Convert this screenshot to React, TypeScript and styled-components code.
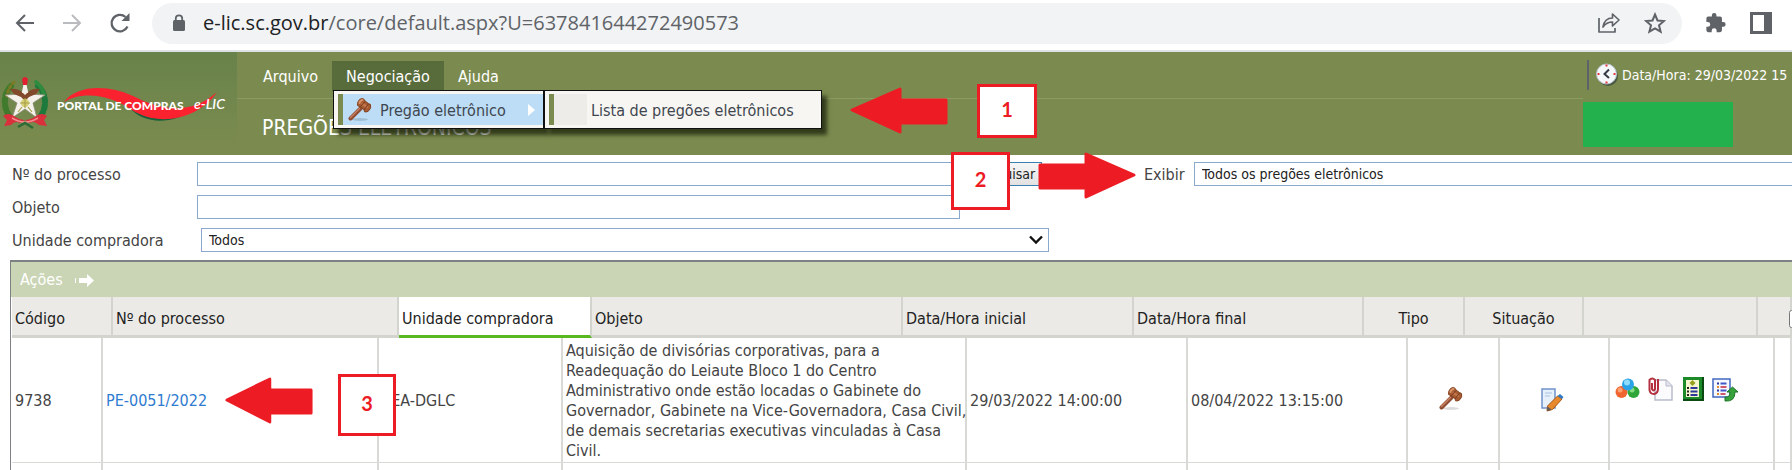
import React from "react";
import styled, { createGlobalStyle, css } from "styled-components";

const GlobalStyle = createGlobalStyle`
  * { box-sizing: border-box; }
  body {
    margin: 0;
    background: #fff;
    color: #444;
    font: 16px/20px "DejaVu Sans Condensed", "Noto Sans", sans-serif;
  }
  button, input, select { font: inherit; color: inherit; }
`;

const Page = styled.div`
  position: relative;
  overflow: hidden;
`;

/* Browser bar */
const BrowserBar = styled.div`
  display: flex;
  align-items: center;
  height: 52px;
  padding: 0 11px 4px 12px;
  border-bottom: 2px solid #dee1e4;
`;

const ToolButton = styled.button<{ $width: number }>`
  display: flex;
  align-items: center;
  justify-content: center;
  width: ${(p) => p.$width}px;
  height: 32px;
  padding: 0;
  border: 0;
  background: none;
  color: #5f6368;
`;

const AddressBox = styled.div`
  display: flex;
  align-items: center;
  flex: 1;
  height: 41px;
  margin: 0 9px 0 18px;
  padding: 0 4px 0 20px;
  border-radius: 21px;
  background: #f1f3f4;
`;

const Url = styled.div`
  flex: 1;
  padding-left: 17px;
  font: 20px/28px "Open Sans", "Noto Sans", sans-serif;
  color: #5f6368;
  white-space: nowrap;
`;

const Host = styled.span`
  color: #202124;
`;

/* Portal header */
const Header = styled.header`
  display: flex;
  height: 103px;
  background: #7b8b4f;
  color: #fff;
`;

const Brand = styled.div`
  flex: none;
  width: 237px;
  background: linear-gradient(#67824a, #7b8b4f 90%);
`;

const HeaderMain = styled.div`
  flex: 1;
  min-width: 0;
`;

const MenuBar = styled.nav`
  display: flex;
  align-items: flex-end;
  height: 47px;
  padding: 0 0 7px 12px;
  border-bottom: 1px solid #8c9b63;
`;

const MenuButton = styled.button<{ $open?: boolean }>`
  height: 30px;
  padding: 2px 14px 0;
  border: 0;
  background: ${(p) => (p.$open ? "#586b3b" : "transparent")};
  color: #fff;
`;

const Title = styled.h1`
  margin: 15px 0 0 25px;
  font-size: 21px;
  line-height: 28px;
  font-weight: 400;
`;

const Session = styled.div`
  flex: none;
  width: 209px;
  padding-top: 8px;
  overflow: hidden;
`;

const Clock = styled.div`
  display: flex;
  align-items: center;
  gap: 4px;
  height: 30px;
  margin-left: 4px;
  padding-left: 7px;
  border-left: 2px solid #5d636b;
  font-size: 14px;
  white-space: nowrap;

  svg { flex: none; }
`;

const UserBlock = styled.div`
  width: 150px;
  height: 45px;
  margin-top: 12px;
  background: #22b14c;
`;

/* Drop-down menus over the header */
const Menus = styled.div`
  position: absolute;
  top: 90px;
  left: 333px;
  display: flex;
  align-items: flex-start;
`;

const MenuPanel = styled.div<{ $width: number }>`
  width: ${(p) => p.$width}px;
  height: 39px;
  padding: 3px 0 3px 4px;
  border: 1px solid #111;
  background: #f7f6f2;
  box-shadow: 5px 6px 4px rgba(20, 25, 5, 0.7);
`;

const MenuItem = styled.button<{ $active?: boolean }>`
  display: flex;
  align-items: center;
  width: 100%;
  height: 31px;
  padding: 0;
  border: 0;
  border-left: 5px solid #7b8b4f;
  background: ${(p) => (p.$active ? "#bcddf5" : "transparent")};
  color: #3f4650;
  white-space: nowrap;
`;

const ItemIcon = styled.span<{ $shaded?: boolean }>`
  display: flex;
  align-items: center;
  justify-content: center;
  width: 33px;
  height: 31px;
  margin-right: 4px;
  ${(p) => p.$shaded && css`background: #edece8;`}
`;

const ItemText = styled.span`
  flex: 1;
  padding-top: 2px;
  text-align: left;
`;

/* Search form */
const Filters = styled.form`
  display: flex;
  align-items: flex-start;
  height: 105px;
  padding: 7px 0 0 12px;
`;

const FilterColumn = styled.div`
  display: flex;
  flex-direction: column;
  flex: none;
  gap: 9px;
  width: 1037px;
`;

const Field = styled.div`
  display: flex;
  align-items: center;
  height: 24px;
`;

const Label = styled.label<{ $width: number }>`
  flex: none;
  width: ${(p) => p.$width}px;
  padding-top: 2px;
`;

const fieldBox = css`
  height: 24px;
  border: 1px solid #8aa9cf;
  background: #fff;
  color: #222;
`;

const TextInput = styled.input`
  ${fieldBox}
  width: 763px;
`;

const SelectWrap = styled.div`
  display: flex;
  align-items: center;
  flex: 1;
  margin-left: 4px;
`;

const Select = styled.select`
  ${fieldBox}
  width: 100%;
  padding: 0 7px;
  border-radius: 0;
  appearance: none;
  font-size: 14px;
`;

const Chevron = styled.svg`
  flex: none;
  margin-left: -20px;
  pointer-events: none;
`;

const SearchButton = styled.button`
  width: 74px;
  height: 24px;
  margin-left: 8px;
  padding: 0;
  border: 1px solid #3c7fb1;
  background: linear-gradient(#f6f6f6, #e2e2e2);
  color: #222;
  font-size: 14px;
`;

/* The drop-down runs on past the right edge of the window */
const ViewFilter = styled.div`
  display: flex;
  align-items: center;
  flex: 1;
  height: 24px;
  margin: 0 -30px 0 95px;
`;

/* Results */
const Results = styled.section`
  margin-left: 10px;
  border: solid #7d8185;
  border-width: 2px 0 0 1px;
`;

const Actions = styled.button`
  display: flex;
  align-items: center;
  gap: 12px;
  width: 100%;
  height: 35px;
  padding: 0 9px;
  border: 0;
  background: #cad5b5;
  color: #fff;
`;

const Table = styled.table`
  display: block;
  padding-left: 1px;
`;

const TableHead = styled.thead`
  display: block;
`;

const TableBody = styled.tbody`
  display: block;
`;

const HeadRow = styled.tr`
  display: grid;
  grid-template-columns: 101px 286px 193px minmax(200px, 1fr) 231px 230px 101px 119px 174px 34px;
  height: 41px;
`;

const Th = styled.th<{ $sorted?: boolean; $center?: boolean }>`
  display: flex;
  align-items: center;
  justify-content: ${(p) => (p.$center ? "center" : "flex-start")};
  padding: 5px 3px 0;
  border-right: 2px solid #d4d4cf;
  border-bottom: 3px solid ${(p) => (p.$sorted ? "#58b820" : "#d4d4cf")};
  background: ${(p) => (p.$sorted ? "#fff" : "#ebeae6")};
  color: #222;
  font-weight: 400;
  white-space: nowrap;
`;

const BodyRow = styled.tr`
  display: grid;
  grid-template-columns: 91px 276px 184px minmax(210px, 1fr) 221px 220px 92px 110px 165px 17px;
  min-height: 7px;
  border-bottom: 1px solid #d9d9d5;

  &:last-child { border-bottom: 0; }
`;

const Td = styled.td<{ $center?: boolean }>`
  display: flex;
  align-items: center;
  justify-content: ${(p) => (p.$center ? "center" : "flex-start")};
  padding: ${(p) => (p.$center ? "0 4px 2px 0" : "3px 0 1px 3px")};
  border-right: 2px solid #d9d9d5;
  white-space: nowrap;
`;

const ProcessLink = styled.a`
  color: #2f7bd0;
  text-decoration: none;
`;

const RowActions = styled.div`
  display: flex;
  align-items: center;
  gap: 7px;
  margin: 0 0 24px 2px;
`;

const IconButton = styled.button`
  display: flex;
  padding: 0;
  border: 0;
  background: none;
`;

const Check = styled.input`
  flex: none;
  width: 18px;
  height: 18px;
  margin: 0 0 0 28px;
`;

/* Numbered callouts over the page */
const Callout = styled.div<{ $x: number; $y: number; $w: number; $h: number }>`
  position: absolute;
  left: ${(p) => p.$x}px;
  top: ${(p) => p.$y}px;
  width: ${(p) => p.$w}px;
  height: ${(p) => p.$h}px;
  display: flex;
  align-items: center;
  justify-content: center;
  padding-bottom: 4px;
  border: 3px solid #ed1c24;
  background: #fff;
  color: #ed1c24;
  font: 700 20px/24px Lato, sans-serif;
`;

const ArrowMark = styled.svg<{ $x: number; $y: number }>`
  position: absolute;
  left: ${(p) => p.$x}px;
  top: ${(p) => p.$y}px;
`;

function Arrow({ x, y, width, right }: { x: number; y: number; width: number; right?: boolean }) {
  return (
    <ArrowMark $x={x} $y={y} width={width} height="47" viewBox="0 0 98 47" preserveAspectRatio="none" aria-hidden="true">
      <path
        d="M2 23 L50 2 V13 H96 V36 H50 V45 Z"
        transform={right ? "translate(98 0) scale(-1 1)" : undefined}
        fill="#ed1c24"
        stroke="#ed1c24"
        strokeWidth="3"
        strokeLinejoin="round"
      />
    </ArrowMark>
  );
}

function Gavel() {
  return (
    <svg width="24" height="26" viewBox="0 0 24 26" aria-hidden="true">
      <ellipse cx="12" cy="22.500" rx="8" ry="1.500" fill="#000" opacity=".14" />
      <path d="M2.500 21.500 L13 11" stroke="#8f4e33" strokeWidth="4" strokeLinecap="round" />
      <path d="M2.500 20.500 L11.500 11.500" stroke="#c88263" strokeWidth="1.400" strokeLinecap="round" />
      <path d="M9.500 8.500 Q9 5 11.500 2.500 Q14 .8 16 2.200 L17 4 L20.500 6.500 L22.500 7.500 Q23.500 11 21 13.500 Q19 15.600 16.500 14.800 L16 12.500 L12.500 10 Z" fill="#a65a32" stroke="#84431f" />
      <path d="M11.500 6 Q12 3.500 14.500 3" stroke="#d89468" strokeWidth="2" fill="none" strokeLinecap="round" />
      <path d="M14.500 7 L19 10" stroke="#c0754a" strokeWidth="2.500" strokeLinecap="round" />
      <path d="M12.500 9.500 L17 4.500 M16 13 L20.500 7" stroke="#7a3a1c" strokeWidth="1" />
    </svg>
  );
}

function Emblem() {
  return (
    <svg width="237" height="103" viewBox="0 0 237 103" role="img" aria-label="Portal de Compras e-LIC">
      <g fill="none" strokeLinecap="round">
        <path d="M11 34 C3 42 3 56 10 65" stroke="#3f7a2d" strokeWidth="6" strokeDasharray="4 3" />
        <path d="M38 34 C47 42 47 56 40 65" stroke="#1e7a3c" strokeWidth="6" strokeDasharray="4 3" />
        <path d="M14 30 C10 34 7 40 7 44" stroke="#7c7a24" strokeWidth="3" strokeDasharray="2 3" />
        <path d="M36 30 C41 34 44 40 44 44" stroke="#2f8c3f" strokeWidth="4" strokeDasharray="3 3" />
      </g>
      <path d="M25 30 L29 42 L45 43 L33 51 L37 66 L25 57 L12 66 L17 51 L5 43 L21 42 Z" fill="#f3f1ea" stroke="#8b8b75" strokeWidth=".8" />
      <path d="M10 37 Q17 36 22 40 L25 43 L28 40 Q33 36 40 37 L36 42 L29 45 L25 49 L21 45 L14 42 Z" fill="#83492b" />
      <circle cx="25" cy="51" r="4" fill="#d7cf73" />
      <path d="M25 46 V56 M20 51 H30 M18 60 L22 55 M32 60 L28 55" stroke="#a8a04d" strokeWidth="1.200" />
      <path d="M24 29 L26 29 L28 41 H22 Z" fill="#f3f1ea" />
      <path d="M22 27 Q25 23 28 27 L27 33 H23 Z" fill="#e02230" />
      <path d="M3 64 Q8 60 14 64 Q25 72 36 64 Q42 60 47 64 L44 68 L47 74 L39 73 Q34 68 30 71 L25 68 L20 71 Q15 68 11 73 L4 74 L7 68 Z" fill="#d9303c" />
      <path d="M12 66 Q25 74 38 66" stroke="#f08d90" strokeWidth="1.500" fill="none" />
      <path d="M18 75 L25 71 L33 76" stroke="#2c6b35" strokeWidth="2.500" fill="none" />
      <path d="M130 56 C143 72 172 73 192 58 C176 66 150 66 130 56 Z" fill="#14613c" />
      <path d="M64 50 C76 33 108 32 133 44 C160 58 190 64 217 40 C200 66 160 76 132 58 C112 44 84 38 64 50 Z" fill="#fb2230" />
      <text x="57" y="58" fill="#fff" fontFamily="Lato, sans-serif" fontSize="12" fontWeight="900">PORTAL DE COMPRAS</text>
      <text x="194" y="57" fill="#fff" fontFamily="Lato, sans-serif" fontSize="14" fontStyle="italic" fontWeight="600">e-LIC</text>
    </svg>
  );
}

export default function App() {
  return (
    <Page>
      <GlobalStyle />
      <BrowserBar>
        <ToolButton $width={26} aria-label="Voltar">
          <svg width="20" height="20" viewBox="0 0 20 20" fill="none" stroke="currentColor" strokeWidth="2"><path d="M19 10H2M10 2L2 10L10 18" /></svg>
        </ToolButton>
        <ToolButton $width={68} aria-label="Avançar">
          <svg width="20" height="20" viewBox="0 0 20 20" fill="none" stroke="#b9bbbe" strokeWidth="2"><path d="M1 10H18M10 2L18 10L10 18" /></svg>
        </ToolButton>
        <ToolButton $width={28} aria-label="Recarregar">
          <svg width="22" height="22" viewBox="0 0 22 22"><path d="M18.500 14.500A8.300 8.300 0 1 1 16.500 5" fill="none" stroke="currentColor" strokeWidth="2.300" /><path d="M20.500 1V9H12.500Z" fill="currentColor" /></svg>
        </ToolButton>
        <AddressBox>
          <svg width="14" height="18" viewBox="0 0 14 18" aria-hidden="true"><rect x="1" y="6" width="12" height="11" rx="1.500" fill="#5f6368" /><path d="M3.800 7V4.500a3.200 3.200 0 0 1 6.400 0V7" fill="none" stroke="#5f6368" strokeWidth="1.800" /></svg>
          <Url><Host>e-lic.sc.gov.br</Host>/core/default.aspx?U=637841644272490573</Url>
          <ToolButton $width={46} aria-label="Compartilhar">
            <svg width="24" height="22" viewBox="0 0 24 22" fill="none" stroke="currentColor" strokeWidth="1.700"><path d="M2 6V20H18V16M6 15C7 9 10 6 15.500 6V2L22 8L15.500 14V10C11 10 8.500 11.500 6 15Z" strokeLinejoin="round" /></svg>
          </ToolButton>
          <ToolButton $width={46} aria-label="Favoritos">
            <svg width="22" height="22" viewBox="0 0 22 22" fill="none" stroke="currentColor" strokeWidth="2"><path d="M11 2.500L13.500 8.500L20 9L15 13.300L16.600 19.700L11 16.300L5.400 19.700L7 13.300L2 9L8.500 8.500Z" /></svg>
          </ToolButton>
        </AddressBox>
        <ToolButton $width={50} aria-label="Extensões">
          <svg width="22" height="22" viewBox="1 0 23 24" fill="currentColor"><path d="M20.500 11H19V7a2 2 0 0 0-2-2h-4V3.500a2.500 2.500 0 0 0-5 0V5H4a2 2 0 0 0-2 2v3.800h1.500a2.700 2.700 0 0 1 0 5.400H2V20a2 2 0 0 0 2 2h3.800v-1.500a2.700 2.700 0 0 1 5.400 0V22H17a2 2 0 0 0 2-2v-4h1.500a2.500 2.500 0 0 0 0-5z" /></svg>
        </ToolButton>
        <ToolButton $width={40} aria-label="Painel lateral">
          <svg width="22" height="22" viewBox="0 0 22 22"><path fill="currentColor" fillRule="evenodd" d="M0 0H22V22H0ZM3 3V19H14V3Z" /></svg>
        </ToolButton>
      </BrowserBar>

      <Header>
        <Brand><Emblem /></Brand>
        <HeaderMain>
          <MenuBar>
            <MenuButton>Arquivo</MenuButton>
            <MenuButton $open aria-expanded="true">Negociação</MenuButton>
            <MenuButton>Ajuda</MenuButton>
          </MenuBar>
          <Title>PREGÕES ELETRÔNICOS</Title>
        </HeaderMain>
        <Session>
          <Clock>
            <svg width="22" height="24" viewBox="0 0 22 24" aria-hidden="true">
              <circle cx="12" cy="13" r="10" fill="#3e4a3d" opacity=".8" />
              <circle cx="10.500" cy="11" r="10" fill="#f4f8fa" stroke="#b9c6d2" />
              <path d="M13 6.500L8.500 11L13 15" fill="none" stroke="#333a45" strokeWidth="2" />
              <path d="M9.500 2.500h2M9.500 19.500h2M1.500 11h2M17.500 11h2" stroke="#e5343a" strokeWidth="2" />
            </svg>
            Data/Hora: 29/03/2022 15
          </Clock>
          <UserBlock />
        </Session>
      </Header>

      <Filters onSubmit={(e) => e.preventDefault()}>
        <FilterColumn>
          <Field>
            <Label $width={185} htmlFor="processo">Nº do processo</Label>
            <TextInput id="processo" />
            <SearchButton type="submit">Pesquisar</SearchButton>
          </Field>
          <Field>
            <Label $width={185} htmlFor="objeto">Objeto</Label>
            <TextInput id="objeto" />
          </Field>
          <Field>
            <Label $width={185} htmlFor="unidade">Unidade compradora</Label>
            <SelectWrap>
              <Select id="unidade"><option>Todos</option></Select>
              <Chevron width="14" height="10" viewBox="0 0 14 10" fill="none" stroke="#111" strokeWidth="2.400"><path d="M1 1.500L7 7.500L13 1.500" /></Chevron>
            </SelectWrap>
          </Field>
        </FilterColumn>
        <ViewFilter>
          <Label $width={46} htmlFor="exibir">Exibir</Label>
          <SelectWrap>
            <Select id="exibir"><option>Todos os pregões eletrônicos</option></Select>
          </SelectWrap>
        </ViewFilter>
      </Filters>

      <Results>
        <Actions>
          Ações
          <svg width="20" height="14" viewBox="0 0 20 14" fill="#fff" aria-hidden="true"><path d="M0 5h1v5H0zM4 5h8V1l7 6.500L12 14v-4H4z" /></svg>
        </Actions>
        <Table>
          <TableHead>
            <HeadRow>
              <Th>Código</Th>
              <Th>Nº do processo</Th>
              <Th $sorted aria-sort="ascending">Unidade compradora</Th>
              <Th>Objeto</Th>
              <Th>Data/Hora inicial</Th>
              <Th>Data/Hora final</Th>
              <Th $center>Tipo</Th>
              <Th $center>Situação</Th>
              <Th />
              <Th><Check type="checkbox" aria-label="Selecionar todos" /></Th>
            </HeadRow>
          </TableHead>
          <TableBody>
            <BodyRow>
              <Td>9738</Td>
              <Td><ProcessLink href="#processo">PE-0051/2022</ProcessLink></Td>
              <Td>SEA-DGLC</Td>
              <Td>
                <div>
                  Aquisição de divisórias corporativas, para a<br />
                  Readequação do Leiaute Bloco 1 do Centro<br />
                  Administrativo onde estão locadas o Gabinete do<br />
                  Governador, Gabinete na Vice-Governadora, Casa Civil,<br />
                  de demais secretarias executivas vinculadas à Casa<br />
                  Civil.
                </div>
              </Td>
              <Td>29/03/2022 14:00:00</Td>
              <Td>08/04/2022 13:15:00</Td>
              <Td $center><Gavel /></Td>
              <Td $center>
                <svg width="24" height="26" viewBox="0 0 24 26" aria-hidden="true">
                  <path d="M2 3H15V22H2Z" fill="#e6f0fb" stroke="#6f93c9" strokeWidth="1.500" />
                  <path d="M5 7h7M5 10h5" stroke="#a9c2e3" />
                  <path d="M7.500 20L17.500 10L22 13L12.500 23.500L7 25Z" fill="#e8892b" stroke="#a6591a" />
                  <path d="M17.500 10L20 8L23.500 11L22 13Z" fill="#2e7ac4" />
                  <path d="M7 25L7.500 20.500L11.500 23.500Z" fill="#5a5a5a" />
                </svg>
              </Td>
              <Td>
                <RowActions>
                  <IconButton aria-label="Lotes">
                    <svg width="25" height="24" viewBox="0 0 25 24">
                      <circle cx="6.500" cy="15" r="6" fill="#f0652f" /><circle cx="5" cy="13" r="2.500" fill="#ffa273" />
                      <circle cx="18.500" cy="15" r="6" fill="#2fa53a" /><circle cx="17" cy="13" r="2.500" fill="#86dc80" />
                      <circle cx="13" cy="7.500" r="6" fill="#29a3e6" /><circle cx="12" cy="5.500" r="3" fill="#8fdcff" />
                    </svg>
                  </IconButton>
                  <IconButton aria-label="Anexos">
                    <svg width="27" height="28" viewBox="0 0 27 28">
                      <path d="M8 5H19L25 11V25H8Z" fill="#fbfbfd" stroke="#b9bccb" strokeWidth="1.500" /><path d="M19 5V11H25" fill="#e2e4ee" stroke="#b9bccb" />
                      <path d="M5 8V14Q6.500 17 8 14V5Q5 2 2.500 5V15Q3 19 7 19Q11 18 11 14V4" fill="none" stroke="#b5303e" strokeWidth="2" />
                    </svg>
                  </IconButton>
                  <IconButton aria-label="Edital">
                    <svg width="24" height="28" viewBox="0 0 24 28">
                      <path d="M2 2H23V26H2Z" fill="#0c4a14" /><path d="M2 2H21V24H2Z" fill="#1d8a2a" /><path d="M5 5H18V22H5Z" fill="#f6f7cf" />
                      <path d="M11.500 5L14.500 8L11.500 11L8.500 8Z" fill="#97a01f" />
                      <path d="M6 13h2M6 16.500h2M6 20h2" stroke="#222" strokeWidth="2" /><path d="M9.500 13h7M9.500 16.500h7M9.500 20h7" stroke="#2c3a9c" strokeWidth="2" />
                    </svg>
                  </IconButton>
                  <IconButton aria-label="Exportar">
                    <svg width="27" height="28" viewBox="0 0 27 28">
                      <path d="M1 4H18V22H1Z" fill="#f5f8ff" stroke="#4268c0" strokeWidth="1.500" />
                      <path d="M5 8.500h2M5 15.500h2" stroke="#2c3a9c" strokeWidth="2" /><path d="M5 12h2M5 19h2" stroke="#e0902b" strokeWidth="2" />
                      <path d="M8.500 8.500h6M8.500 15.500h6" stroke="#4358c8" strokeWidth="2" /><path d="M8.500 12h6M8.500 19h5" stroke="#d0566a" strokeWidth="2" />
                      <path d="M13 22Q18 23 18 17H15L20.500 12L26 17H23Q23 27 13 26Z" fill="#37a13c" stroke="#1e7526" />
                    </svg>
                  </IconButton>
                </RowActions>
              </Td>
              <Td />
            </BodyRow>
            <BodyRow>
              {Array.from({ length: 10 }, (_, i) => <Td key={i} />)}
            </BodyRow>
          </TableBody>
        </Table>
      </Results>

      <Menus>
        <MenuPanel $width={211}>
          <MenuItem $active>
            <ItemIcon><Gavel /></ItemIcon>
            <ItemText>Pregão eletrônico</ItemText>
            <svg width="16" height="12" viewBox="0 0 16 12" aria-hidden="true"><path d="M1 0L8 6L1 12Z" fill="#fff" /></svg>
          </MenuItem>
        </MenuPanel>
        <MenuPanel $width={278}>
          <MenuItem>
            <ItemIcon $shaded />
            <ItemText>Lista de pregões eletrônicos</ItemText>
          </MenuItem>
        </MenuPanel>
      </Menus>

      <Arrow x={850} y={87} width={98} />
      <Callout $x={977} $y={84} $w={60} $h={54}>1</Callout>
      <Arrow x={1038} y={152} width={98} right />
      <Callout $x={951} $y={152} $w={59} $h={58}>2</Callout>
      <Arrow x={225} y={377} width={88} />
      <Callout $x={338} $y={374} $w={58} $h={62}>3</Callout>
    </Page>
  );
}
